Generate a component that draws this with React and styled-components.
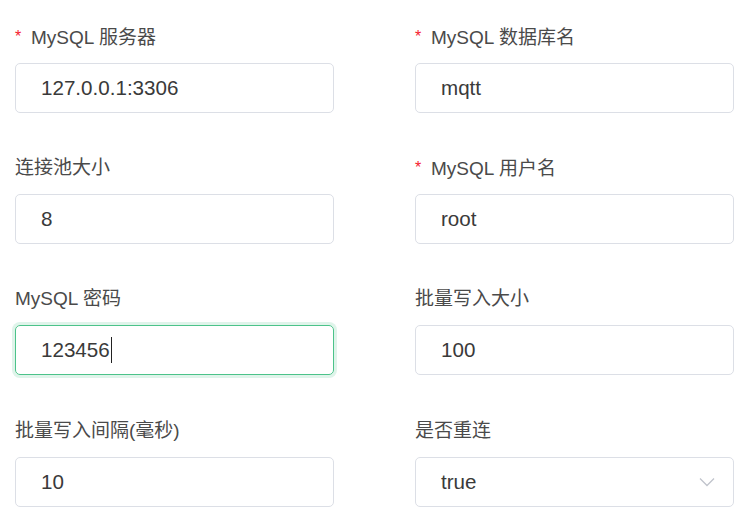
import React from 'react'
import styled, { createGlobalStyle } from 'styled-components'

const GlobalStyle = createGlobalStyle`
  body {
    margin: 0;
    background: #fff;
    font-family: "Liberation Sans", "Noto Sans CJK SC", sans-serif;
  }
`

const Form = styled.div`
  display: grid;
  grid-template-columns: 319px 319px;
  column-gap: 81px;
  padding: 22px 0 0 15px;
`

const Item = styled.div`
  display: flex;
  flex-direction: column;
  margin-bottom: 40.2px;
`

const Label = styled.div`
  height: 30px;
  line-height: 30px;
  font-size: 19px;
  color: #4a4a4a;
  margin-bottom: 11px;
  white-space: nowrap;
`

const Star = styled.span`
  display: inline-block;
  width: 7px;
  font-size: 16px;
  vertical-align: 2px;
  color: #f5222d;
  margin-right: 9px;
`

const Box = styled.div`
  position: relative;
  box-sizing: border-box;
  height: 50px;
  border: 1px solid ${p => (p.focus ? '#4cc38a' : '#dcdfe6')};
  box-shadow: ${p => (p.focus ? '0 0 0 3px rgba(76,195,138,0.18)' : 'none')};
  border-radius: 5px;
  display: flex;
  align-items: center;
  padding: 0 25px;
  font-size: 20.6px;
  color: #3a3a3a;
`

const Caret = styled.span`
  display: inline-block;
  width: 1px;
  height: 26px;
  background: #222;
  margin-left: 1px;
`

const Arrow = styled.svg`
  position: absolute;
  right: 18px;
  top: 50%;
  margin-top: -5px;
`

const fields = [
  { label: 'MySQL 服务器', value: '127.0.0.1:3306', req: true },
  { label: 'MySQL 数据库名', value: 'mqtt', req: true },
  { label: '连接池大小', value: '8' },
  { label: 'MySQL 用户名', value: 'root', req: true },
  { label: 'MySQL 密码', value: '123456', focus: true },
  { label: '批量写入大小', value: '100' },
  { label: '批量写入间隔(毫秒)', value: '10' },
  { label: '是否重连', value: 'true', select: true },
]

export default function App() {
  return (
    <>
      <GlobalStyle />
      <Form>
        {fields.map(f => (
          <Item key={f.label}>
            <Label>
              {f.req && <Star>*</Star>}
              {f.label}
            </Label>
            <Box focus={f.focus ? 1 : 0}>
              {f.value}
              {f.focus && <Caret />}
              {f.select && (
                <Arrow width="16" height="10" viewBox="0 0 16 10">
                  <path d="M1 1.5 L8 8.5 L15 1.5" fill="none" stroke="#c0c4cc" strokeWidth="1.3" />
                </Arrow>
              )}
            </Box>
          </Item>
        ))}
      </Form>
    </>
  )
}
